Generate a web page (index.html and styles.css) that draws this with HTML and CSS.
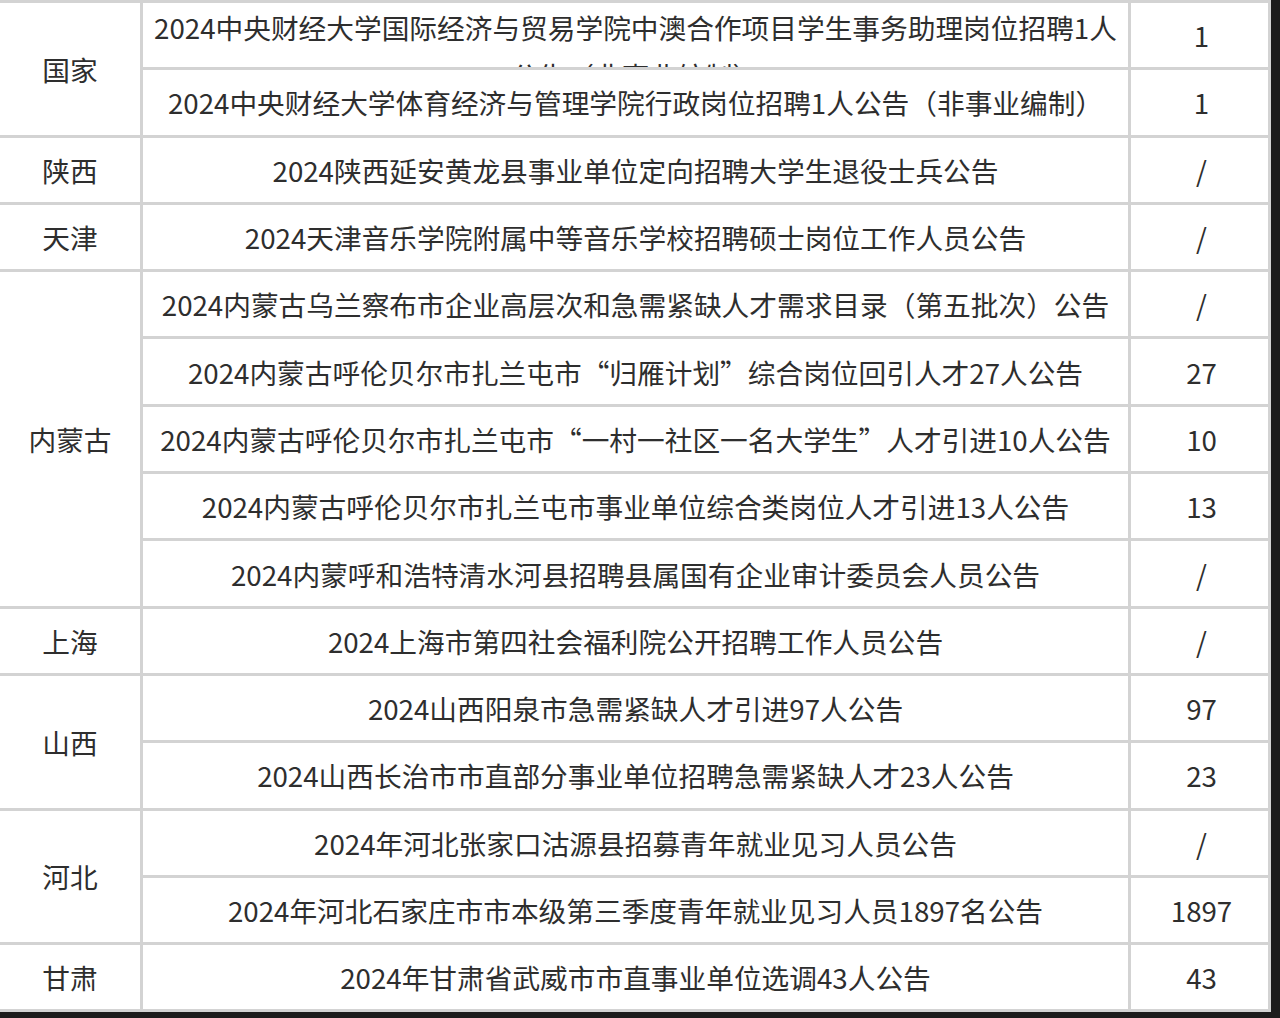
FILE: index.html
```html
<!DOCTYPE html>
<html lang="zh-CN">
<head>
<meta charset="utf-8">
<title>招聘公告</title>
<link rel="stylesheet" href="styles.css">
</head>
<body>
<div class="table">
  <div class="cell region r2">国家</div>
  <div class="cell title top">2024中央财经大学国际经济与贸易学院中澳合作项目学生事务助理岗位招聘1人<br>公告（非事业编制）</div>
  <div class="cell num">1</div>
  <div class="cell title">2024中央财经大学体育经济与管理学院行政岗位招聘1人公告（非事业编制）</div>
  <div class="cell num">1</div>

  <div class="cell region">陕西</div>
  <div class="cell title">2024陕西延安黄龙县事业单位定向招聘大学生退役士兵公告</div>
  <div class="cell num">/</div>

  <div class="cell region">天津</div>
  <div class="cell title">2024天津音乐学院附属中等音乐学校招聘硕士岗位工作人员公告</div>
  <div class="cell num">/</div>

  <div class="cell region r5">内蒙古</div>
  <div class="cell title">2024内蒙古乌兰察布市企业高层次和急需紧缺人才需求目录（第五批次）公告</div>
  <div class="cell num">/</div>
  <div class="cell title">2024内蒙古呼伦贝尔市扎兰屯市“归雁计划”综合岗位回引人才27人公告</div>
  <div class="cell num">27</div>
  <div class="cell title">2024内蒙古呼伦贝尔市扎兰屯市“一村一社区一名大学生”人才引进10人公告</div>
  <div class="cell num">10</div>
  <div class="cell title">2024内蒙古呼伦贝尔市扎兰屯市事业单位综合类岗位人才引进13人公告</div>
  <div class="cell num">13</div>
  <div class="cell title">2024内蒙呼和浩特清水河县招聘县属国有企业审计委员会人员公告</div>
  <div class="cell num">/</div>

  <div class="cell region">上海</div>
  <div class="cell title">2024上海市第四社会福利院公开招聘工作人员公告</div>
  <div class="cell num">/</div>

  <div class="cell region r2">山西</div>
  <div class="cell title">2024山西阳泉市急需紧缺人才引进97人公告</div>
  <div class="cell num">97</div>
  <div class="cell title">2024山西长治市市直部分事业单位招聘急需紧缺人才23人公告</div>
  <div class="cell num">23</div>

  <div class="cell region r2">河北</div>
  <div class="cell title">2024年河北张家口沽源县招募青年就业见习人员公告</div>
  <div class="cell num">/</div>
  <div class="cell title">2024年河北石家庄市市本级第三季度青年就业见习人员1897名公告</div>
  <div class="cell num">1897</div>

  <div class="cell region">甘肃</div>
  <div class="cell title">2024年甘肃省武威市市直事业单位选调43人公告</div>
  <div class="cell num">43</div>
</div>
</body>
</html>
```

FILE: styles.css
```css
html, body {
  margin: 0;
  padding: 0;
  background: #1c1c1c;
}

.table {
  width: 1271px;
  box-sizing: border-box;
  display: grid;
  grid-template-columns: 140px 985px 137px;
  grid-auto-rows: 64.3px;
  gap: 3px;
  padding: 3px 3px 3px 0;
  background: #d3d3d3;
  font-family: "Noto Sans CJK SC", "Noto Sans", sans-serif;
  font-size: 27.7px;
  color: #2e2e2e;
}

.cell {
  background: #ffffff;
  display: flex;
  align-items: center;
  justify-content: center;
  text-align: center;
  overflow: hidden;
  white-space: nowrap;
}

.region {
  grid-column: 1;
}

.r2 {
  grid-row: span 2;
}

.r5 {
  grid-row: span 5;
}

.title {
  grid-column: 2;
}

.title.top {
  align-items: flex-start;
  line-height: 48px;
}

.num {
  grid-column: 3;
  padding-left: 4px;
}
```
